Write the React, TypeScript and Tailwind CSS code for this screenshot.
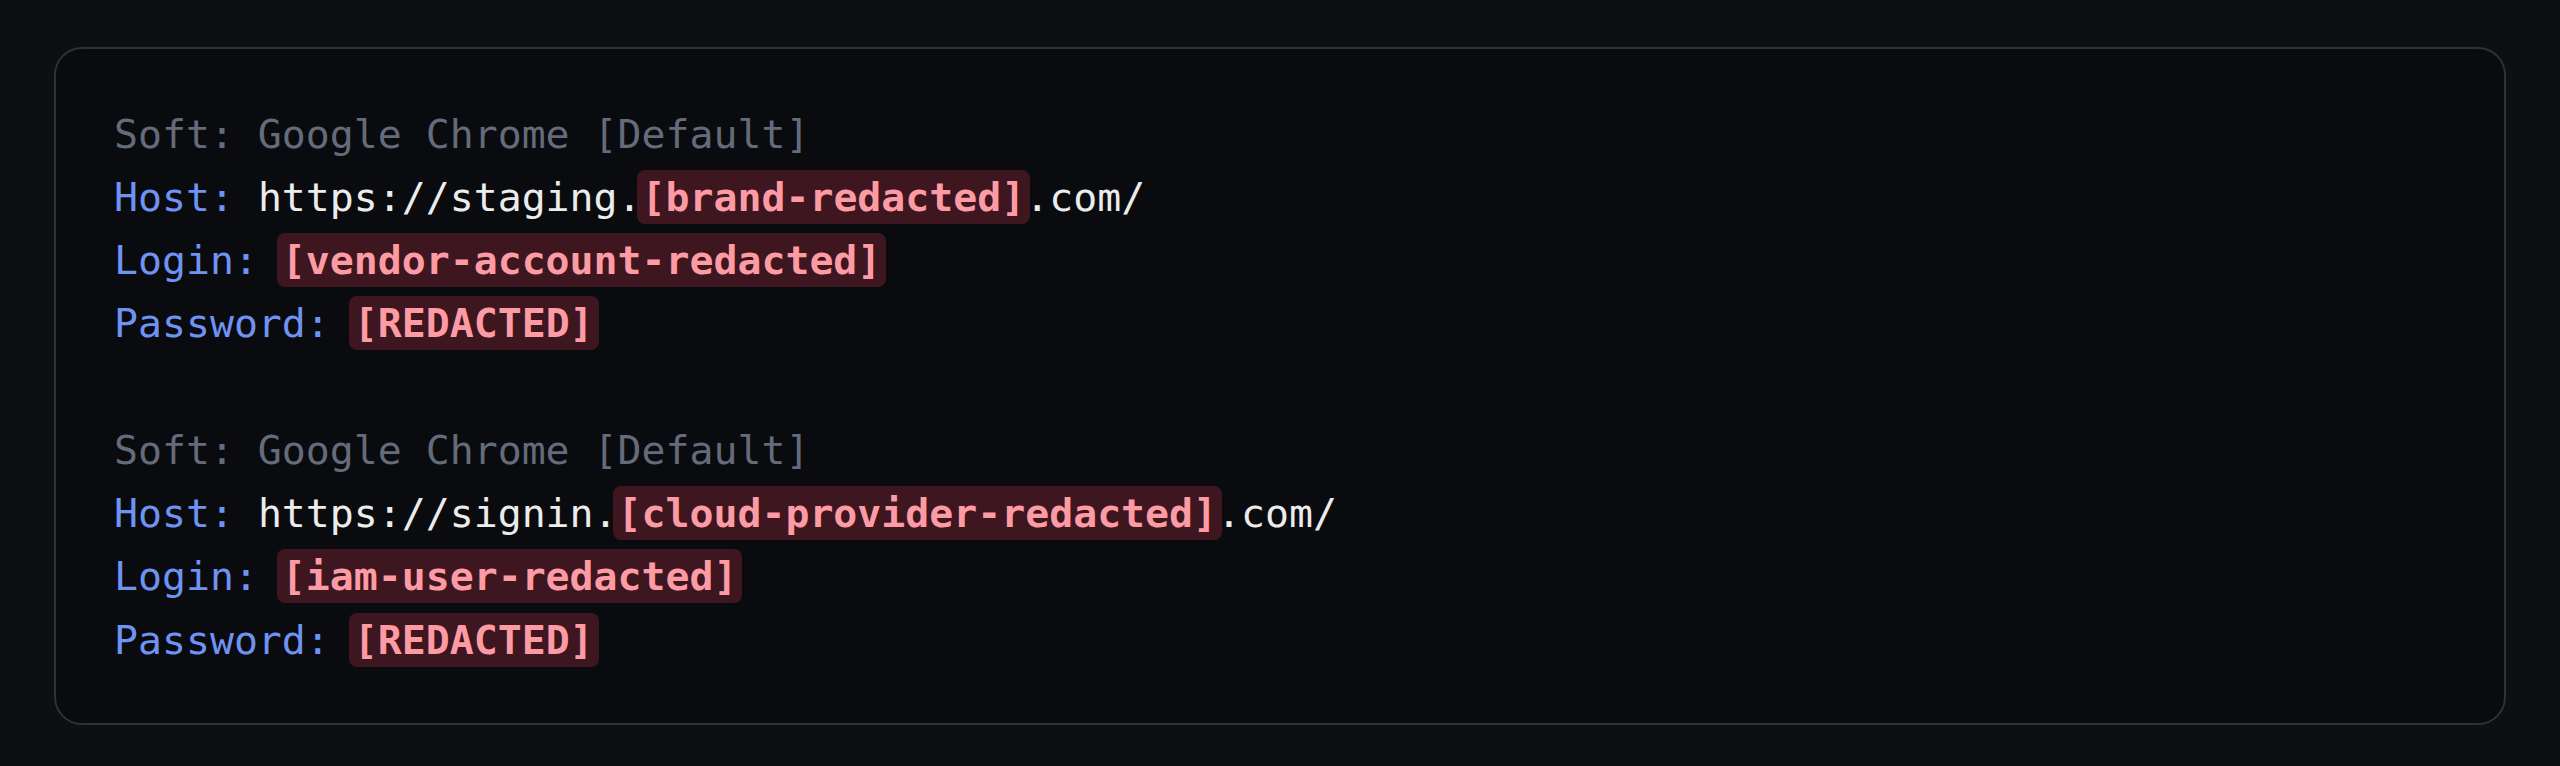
import React from "react";

const mono = "font-['DejaVu_Sans_Mono','Liberation_Mono',monospace]";

function R({ children }: { children: React.ReactNode }) {
  return (
    <span className="bg-[#3d1620] text-[#fd9ba4] font-bold rounded-[8px] px-[5px] -mx-[5px] py-[4px]">
      {children}
    </span>
  );
}

function Entry({ host, hostRedacted, hostTail, login }: { host: string; hostRedacted: string; hostTail: string; login: string }) {
  return (
    <>
      <div className="text-[#646b7b]">Soft: Google Chrome [Default]</div>
      <div>
        <span className="text-[#6e93f3]">Host: </span>
        <span className="text-[#ececec]">{host}</span>
        <R>{hostRedacted}</R>
        <span className="text-[#ececec]">{hostTail}</span>
      </div>
      <div>
        <span className="text-[#6e93f3]">Login: </span>
        <R>{login}</R>
      </div>
      <div>
        <span className="text-[#6e93f3]">Password: </span>
        <R>[REDACTED]</R>
      </div>
    </>
  );
}

export default function App() {
  return (
    <div className="min-h-[766px] w-full bg-[#0e0f13] pt-[47px] px-[54px]">
      <div className={`rounded-[28px] border-2 border-[#2e313a] bg-[#0a0b0e] pt-[53.5px] pb-[51.5px] pl-[58px] pr-[58px] text-[39.85px] leading-[63.25px] whitespace-pre ${mono}`}>
        <Entry host="https://staging." hostRedacted="[brand-redacted]" hostTail=".com/" login="[vendor-account-redacted]" />
        <div className="h-[63.25px]" />
        <Entry host="https://signin." hostRedacted="[cloud-provider-redacted]" hostTail=".com/" login="[iam-user-redacted]" />
      </div>
    </div>
  );
}
